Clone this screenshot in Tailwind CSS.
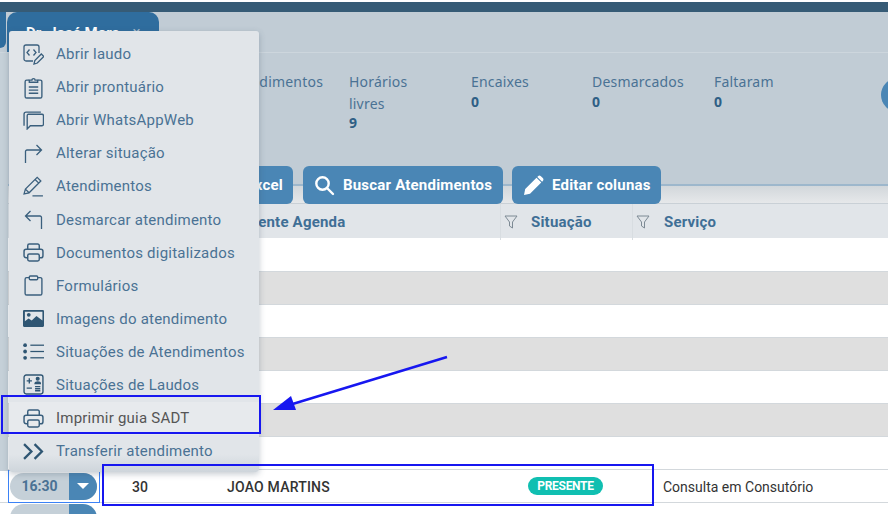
<!DOCTYPE html>
<html lang="pt-BR">
<head>
<meta charset="UTF-8">
<title>Agenda</title>
<script src="https://cdn.jsdelivr.net/npm/@tailwindcss/browser@4"></script>
</head>
<body class="bg-white font-['Roboto',sans-serif] overflow-hidden">
<div class="relative w-[888px] h-[514px] overflow-hidden">
  <!-- top bar -->
  <div class="h-[2px] bg-white"></div>
  <div class="h-[10px] bg-[#365b76]"></div>

  <!-- tabs -->
  <div class="flex h-[41px] gap-[1px] bg-[#c1ccd5] border-b border-[#cdd6dd]">
    <div class="w-[6px] h-[36px] bg-[#2f6d9e] rounded-br-[8px]"></div>
    <div class="w-[152px] h-[40px] bg-[#2f6d9e] rounded-t-[10px] flex items-start pt-[10px] pl-[19px] gap-[13px] text-[15px] font-bold text-white">
      <span>Dr. José Mora</span><span class="text-[#a9bccb] font-normal leading-[20px]">×</span>
    </div>
  </div>

  <!-- stats -->
  <div class="h-[113px] bg-[#c1ccd5] font-['Noto_Sans',sans-serif] text-[14px] tracking-[0.2px] text-[#4a7294] relative">
    <div class="flex pt-[18px] items-start">
      <div class="ml-[228px] w-[121px] leading-[22px]">Atendimentos</div>
      <div class="w-[122px] leading-[22px]">Horários<br>livres<b class="block leading-[16px] text-[#2f5f85]">9</b></div>
      <div class="w-[121px] leading-[22px]">Encaixes<b class="block leading-[18px] text-[#2f5f85]">0</b></div>
      <div class="w-[122px] leading-[22px]">Desmarcados<b class="block leading-[18px] text-[#2f5f85]">0</b></div>
      <div class="leading-[22px]">Faltaram<b class="block leading-[18px] text-[#2f5f85]">0</b></div>
    </div>
  </div>

  <!-- toolbar -->
  <div class="h-[38px] flex pl-[162px] bg-[linear-gradient(#c1ccd5_0,#c1ccd5_18px,#9db7cc_18px,#9db7cc_20px,#d2d7db_20px,#e6e8ea_37px,#c9d0d6_37px)] text-white text-[15px] font-bold tracking-[0.2px]">
    <div class="w-[131px] mr-[10px] rounded-[6px] bg-[#4a86b5] flex items-center justify-end pr-[10px]">Excel</div>
    <div class="w-[200px] mr-[9px] rounded-[6px] bg-[#4a86b5] flex items-center pl-[11px] gap-[8px]">
      <svg class="w-[21px] h-[21px]" viewBox="0 0 21 21" fill="none" stroke="white" stroke-width="2.4" stroke-linecap="round"><circle cx="8.500" cy="8.500" r="6.200"/><path d="M13 13l6 6"/></svg>
      <span>Buscar Atendimentos</span>
    </div>
    <div class="w-[149px] rounded-[6px] bg-[#4a86b5] flex items-center pl-[11px] gap-[8px]">
      <svg class="w-[21px] h-[21px]" viewBox="0 0 21 21" fill="white"><path d="M1 20l1.200-6L13.500 2.700l4.800 4.800L7 18.800zM15 1.200c.9-.9 2-.9 2.900 0l1.900 1.900c.9.9.9 2 0 2.900l-.7.7-4.800-4.800z"/></svg>
      <span>Editar colunas</span>
    </div>
  </div>

  <!-- table -->
  <div class="h-[35px] grid grid-cols-[500px_132px_1fr] bg-[#e1e5e9] text-[15px] font-bold text-[#3f6f96] tracking-[0.2px] border-b border-white">
    <div class="pl-[228px] leading-[36px]">Paciente Agenda</div>
    <div class="flex items-center border-l border-[#d8dde1] pl-[3px] gap-[13px]">
      <svg class="w-[14px] h-[15px]" viewBox="0 0 14 15" fill="none" stroke="#7d8a94" stroke-width="1"><path d="M1 1h12L8.500 7v6l-3-2V7z"/></svg>
      <span>Situação</span>
    </div>
    <div class="flex items-center border-l border-[#d8dde1] pl-[3px] gap-[14px]">
      <svg class="w-[14px] h-[15px]" viewBox="0 0 14 15" fill="none" stroke="#7d8a94" stroke-width="1"><path d="M1 1h12L8.500 7v6l-3-2V7z"/></svg>
      <span>Serviço</span>
    </div>
  </div>
  <div class="h-[33px] bg-white border-b border-[#d3d8dc]"></div>
  <div class="h-[33px] bg-[#dfdfdf] border-b border-[#d3d8dc]"></div>
  <div class="h-[33px] bg-white border-b border-[#d3d8dc]"></div>
  <div class="h-[33px] bg-[#dfdfdf] border-b border-[#d3d8dc]"></div>
  <div class="h-[33px] bg-white border-b border-[#d3d8dc]"></div>
  <div class="h-[33px] bg-[#dfdfdf] border-b border-[#d3d8dc]"></div>
  <div class="h-[33px] bg-white border-b border-[#d3d8dc]"></div>
  <div class="h-[33px] bg-white border-b border-[#d3d8dc] flex items-center text-[14px] text-[#333] relative">
    <div class="ml-[8px] w-[92px] h-[33px] border border-[#3b82f6] flex items-center pl-[1px]">
      <div class="w-[87px] h-[27px] rounded-full bg-[#c5d0d8] overflow-hidden flex">
        <div class="w-[59px] flex items-center justify-center text-[14px] font-bold text-[#4a7294]">16:30</div>
        <div class="flex-1 bg-[#4a86b5] flex items-center justify-center">
          <div class="w-0 h-0 border-x-[6px] border-x-transparent border-t-[6px] border-t-white"></div>
        </div>
      </div>
    </div>
    <div class="ml-[32px] mt-[2px] w-[95px] font-medium">30</div>
    <div class="w-[301px] mt-[2px] font-medium tracking-[0.2px]">JOAO MARTINS</div>
    <div class="w-[75px] h-[18px] rounded-full bg-[#10bfb1] text-white text-[12px] font-bold tracking-[-0.3px] flex items-center justify-center">PRESENTE</div>
    <div class="ml-[60px] mt-[2px]">Consulta em Consutório</div>
  </div>
  <div class="pl-[10px] pt-[1px]"><div class="w-[87px] h-[14px] rounded-t-[14px] bg-[linear-gradient(90deg,#c5d0d8_59px,#4a86b5_59px)]"></div></div>

  <!-- circle button cut by the edge -->
  <div class="absolute left-[881px] top-[78px] w-[34px] h-[34px] rounded-full bg-[#4a86b5]"></div>
  <!-- left strip -->
  <div class="absolute left-0 top-[53px] w-[8px] h-[418px] bg-[#c5d0d8]"></div>

  <!-- context menu -->
  <div class="absolute left-[9px] top-[31px] w-[250px] h-[441px] rounded-[3px] bg-[linear-gradient(#e1e5e9_96%,#ced5db)] shadow-[0_2px_6px_rgba(60,80,100,0.3)] pt-[7px] text-[15px] text-[#4a7294] tracking-[0.22px]">
    <div class="h-[33.05px] flex items-center gap-[12px] pl-[14px]">
      <svg class="w-[21px] h-[21px] shrink-0" viewBox="0 0 21 21" fill="none" stroke="#3a5f7d" stroke-width="1.300"><path d="M10 17H3a2 2 0 0 1-2-2V3a2 2 0 0 1 2-2h11a2 2 0 0 1 2 2v6"/><path d="M6.500 5.500L4 8.500l2.500 3M10.500 5.500l2.500 3-2.500 3"/><path d="M11 20l.8-3.500 6.500-6.500 2.500 2.500-6.500 6.500z"/></svg>
      <span>Abrir laudo</span>
    </div>
    <div class="h-[33.05px] flex items-center gap-[12px] pl-[14px]">
      <svg class="w-[21px] h-[22px] shrink-0" viewBox="0 0 20 21" fill="none" stroke="#3a5f7d" stroke-width="1.300"><path d="M6 3H3.500A1.500 1.500 0 0 0 2 4.500v14A1.500 1.500 0 0 0 3.500 20h13a1.500 1.500 0 0 0 1.500-1.500v-14A1.500 1.500 0 0 0 16.500 3H14"/><path d="M6 5V3h2.500a1.500 1.500 0 0 1 3 0H14v2zM5.500 9.500h9M5.500 12.500h9M5.500 15.500h9"/></svg>
      <span>Abrir prontuário</span>
    </div>
    <div class="h-[33.05px] flex items-center gap-[12px] pl-[14px]">
      <svg class="w-[21px] h-[19px] shrink-0" viewBox="0 0 20 18" fill="none" stroke="#3a5f7d" stroke-width="1.300"><path d="M17 1H3a2 2 0 0 0-2 2v11"/><path d="M5 3h13a1.500 1.500 0 0 1 1.500 1.500v8A1.500 1.500 0 0 1 18 14H7l-3 3V4.500A1.500 1.500 0 0 1 5 3z"/></svg>
      <span>Abrir WhatsAppWeb</span>
    </div>
    <div class="h-[33.05px] flex items-center gap-[12px] pl-[14px]">
      <svg class="w-[21px] h-[19px] shrink-0" viewBox="0 0 20 19" fill="none" stroke="#3a5f7d" stroke-width="1.300"><path d="M2 19V7.500A1.500 1.500 0 0 1 3.500 6H18M13 1l5 5-5 5"/></svg>
      <span>Alterar situação</span>
    </div>
    <div class="h-[33.05px] flex items-center gap-[12px] pl-[14px]">
      <svg class="w-[21px] h-[21px] shrink-0" viewBox="0 0 20 20" fill="none" stroke="#3a5f7d" stroke-width="1.200"><path d="M1 17l1.300-4.500L13.500 1.300 17 4.800 5.800 16zM2.300 12.500L5.800 16M11.500 3.300L15 6.800M9 19h10"/></svg>
      <span>Atendimentos</span>
    </div>
    <div class="h-[33.05px] flex items-center gap-[12px] pl-[14px]">
      <svg class="w-[21px] h-[19px] shrink-0" viewBox="0 0 20 19" fill="none" stroke="#3a5f7d" stroke-width="1.300"><path d="M18 19V7.500A1.500 1.500 0 0 0 16.500 6H2M7 1L2 6l5 5"/></svg>
      <span>Desmarcar atendimento</span>
    </div>
    <div class="h-[33.05px] flex items-center gap-[12px] pl-[14px]">
      <svg class="w-[21px] h-[19px] shrink-0" viewBox="0 0 20 18" fill="none" stroke="#3a5f7d" stroke-width="1.400"><path d="M4.500 6V2.500A1.500 1.500 0 0 1 6 1h8a1.500 1.500 0 0 1 1.500 1.500V6"/><path d="M4.500 14H3a2 2 0 0 1-2-2V8a2 2 0 0 1 2-2h14a2 2 0 0 1 2 2v4a2 2 0 0 1-2 2h-1.500"/><rect x="4.500" y="10.500" width="11" height="6.500" rx="1.500"/></svg>
      <span>Documentos digitalizados</span>
    </div>
    <div class="h-[33.05px] flex items-center gap-[12px] pl-[14px]">
      <svg class="w-[21px] h-[21px] shrink-0" viewBox="0 0 20 20" fill="none" stroke="#3a5f7d" stroke-width="1.300"><path d="M6 2.500H3.500A1.500 1.500 0 0 0 2 4v13.500A1.500 1.500 0 0 0 3.500 19h13a1.500 1.500 0 0 0 1.500-1.500V4a1.500 1.500 0 0 0-1.500-1.500H14"/><rect x="6" y="1" width="8" height="3.500" rx="1"/></svg>
      <span>Formulários</span>
    </div>
    <div class="h-[33.05px] flex items-center gap-[12px] pl-[14px]">
      <svg class="w-[21px] h-[17px] shrink-0" viewBox="0 0 20 16" fill="#2f5673"><path fill-rule="evenodd" d="M1 0h18a1 1 0 0 1 1 1v14a1 1 0 0 1-1 1H1a1 1 0 0 1-1-1V1a1 1 0 0 1 1-1zm.8 1.500v9l3.500-2.500 3 2 4.500-4.500 5.700 4.500V1.500z"/><circle cx="5.500" cy="4.500" r="1.800"/></svg>
      <span>Imagens do atendimento</span>
    </div>
    <div class="h-[33.05px] flex items-center gap-[12px] pl-[14px]">
      <svg class="w-[21px] h-[17px] shrink-0" viewBox="0 0 20 16" fill="#2f5673"><circle cx="2" cy="2" r="1.800"/><circle cx="2" cy="8" r="1.800"/><circle cx="2" cy="14" r="1.800"/><rect x="7" y="1.400" width="13" height="1.200"/><rect x="7" y="7.400" width="13" height="1.200"/><rect x="7" y="13.400" width="13" height="1.200"/></svg>
      <span>Situações de Atendimentos</span>
    </div>
    <div class="h-[33.05px] flex items-center gap-[12px] pl-[14px]">
      <svg class="w-[21px] h-[21px] shrink-0" viewBox="0 0 20 20" fill="none" stroke="#2f5673" stroke-width="1.300"><rect x="1" y="1" width="18" height="18" rx="2"/><path d="M3.500 6.500h5M6 4v5M3.500 13.500h5M11.500 12h5M11.500 14h5M11.500 16h5"/><circle cx="14" cy="4.500" r="1.300" fill="#2f5673"/><path d="M11.500 9c0-2 5-2 5 0z" fill="#2f5673"/></svg>
      <span>Situações de Laudos</span>
    </div>
    <div class="h-[33.05px] flex items-center gap-[12px] pl-[14px] bg-[#e7eaed] text-[#555]">
      <svg class="w-[21px] h-[19px] shrink-0" viewBox="0 0 20 18" fill="none" stroke="#3a5f7d" stroke-width="1.400"><path d="M4.500 6V2.500A1.500 1.500 0 0 1 6 1h8a1.500 1.500 0 0 1 1.500 1.500V6"/><path d="M4.500 14H3a2 2 0 0 1-2-2V8a2 2 0 0 1 2-2h14a2 2 0 0 1 2 2v4a2 2 0 0 1-2 2h-1.500"/><rect x="4.500" y="10.500" width="11" height="6.500" rx="1.500"/></svg>
      <span>Imprimir guia SADT</span>
    </div>
    <div class="h-[33.05px] flex items-center gap-[12px] pl-[14px]">
      <svg class="w-[21px] h-[17px] shrink-0" viewBox="0 0 20 16" fill="none" stroke="#2f5673" stroke-width="2.200"><path d="M1 1l7 7-7 7M11 1l7 7-7 7"/></svg>
      <span>Transferir atendimento</span>
    </div>
  </div>

  <!-- annotations -->
  <div class="absolute left-[1px] top-[395px] w-[260px] h-[39px] border-2 border-[#1717f0]"></div>
  <div class="absolute left-[102px] top-[464px] w-[552px] h-[42px] border-2 border-[#1717f0]"></div>
  <svg class="absolute left-[260px] top-[350px] w-[200px] h-[70px]" viewBox="0 0 200 70" fill="none">
    <path d="M187 7L26 56" stroke="#1717f0" stroke-width="2.400"/>
    <path d="M13 60L31 46l5 14z" fill="#1717f0"/>
  </svg>
</div>
</body>
</html>
